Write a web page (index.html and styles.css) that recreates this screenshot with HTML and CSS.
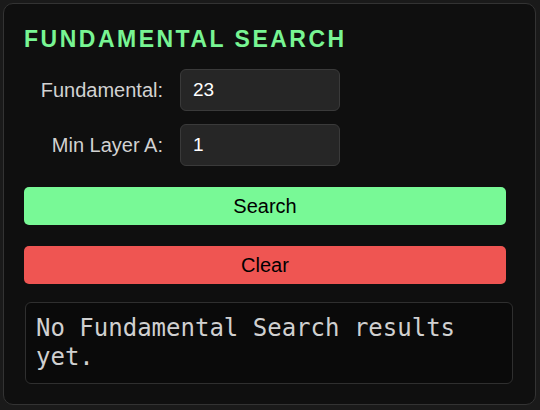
FILE: index.html
```html
<!DOCTYPE html>
<html>
<head>
<meta charset="utf-8">
<link rel="stylesheet" href="styles.css">
</head>
<body>
<div class="panel">
  <h2 class="title">FUNDAMENTAL SEARCH</h2>
  <div class="form">
    <div class="row">
      <label class="label">Fundamental:</label>
      <input class="field" type="text" value="23">
    </div>
    <div class="row">
      <label class="label">Min Layer A:</label>
      <input class="field" type="text" value="1">
    </div>
  </div>
  <button class="btn btn-search">Search</button>
  <button class="btn btn-clear">Clear</button>
  <div class="results">No Fundamental Search results yet.</div>
</div>
</body>
</html>
```

FILE: styles.css
```css
html, body {
  margin: 0;
  background: #1a1a1a;
}
body {
  padding: 3px;
  font-family: "Liberation Sans", Arial, sans-serif;
}
.panel {
  box-sizing: border-box;
  width: 533px;
  background: #0f0f0f;
  border: 1px solid #333333;
  border-radius: 10px;
  padding: 22px 20px 20px 20px;
  display: flex;
  flex-direction: column;
}
.title {
  margin: 0;
  font-size: 23px;
  line-height: 26px;
  font-weight: bold;
  letter-spacing: 2.5px;
  color: #78f593;
  padding-left: 0;
}
.form {
  margin-top: 17px;
  display: flex;
  flex-direction: column;
  gap: 13px;
}
.row {
  display: grid;
  grid-template-columns: 139px 160px;
  column-gap: 17px;
  align-items: center;
}
.label {
  text-align: right;
  font-size: 20px;
  color: #d2d2d2;
}
.field {
  box-sizing: border-box;
  height: 42px;
  width: 160px;
  background: #262626;
  border: 1px solid #3a3a3a;
  border-radius: 6px;
  padding: 0 12px;
  color: #ffffff;
  font-family: "Liberation Sans", Arial, sans-serif;
  font-size: 19px;
  outline: none;
}
.btn {
  box-sizing: border-box;
  width: 482px;
  height: 38px;
  border: none;
  border-radius: 5px;
  font-family: "Liberation Sans", Arial, sans-serif;
  font-size: 20px;
  color: #000000;
  padding: 0;
}
.btn-search {
  margin-top: 21px;
  background: #78f996;
}
.btn-clear {
  margin-top: 21px;
  background: #ef5552;
}
.results {
  box-sizing: border-box;
  margin: 18px 0 0 1px;
  width: 488px;
  background: #0a0a0a;
  border: 1px solid #2f2f2f;
  border-radius: 6px;
  padding: 11px 10px;
  font-family: "DejaVu Sans Mono", monospace;
  font-size: 24px;
  line-height: 29px;
  color: #d0d0d0;
}
```
